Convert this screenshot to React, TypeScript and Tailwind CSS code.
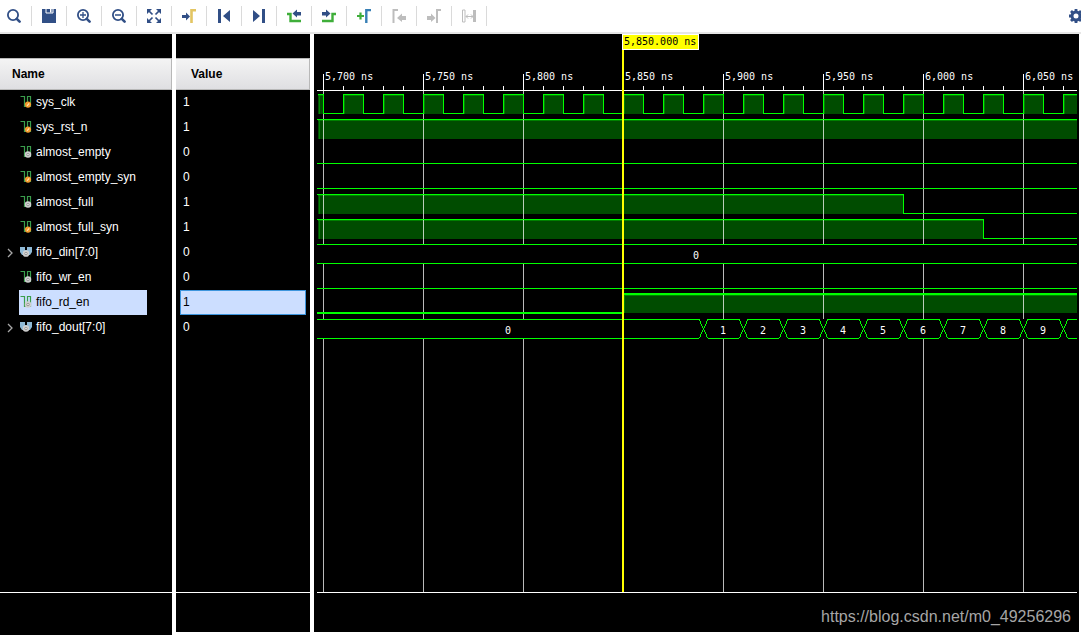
import React from "react";

const NAVY = "#314f86";
const GREEN = "#3fae3a";
const GRAY = "#bdbdbd";

type Tool = { label: string; art: React.ReactNode; disabled?: boolean };

const lens = (
  <>
    <circle cx="6" cy="6" r="5.1" fill="none" stroke={NAVY} strokeWidth="1.8" />
    <path d="M9.8 9.8L12.6 12.6" stroke={NAVY} strokeWidth="2.6" strokeLinecap="round" />
  </>
);

const tools: Tool[] = [
  { label: "Search", art: lens },
  {
    label: "Save",
    art: (
      <>
        <path d="M0 0H14V14H0Z" fill={NAVY} />
        <path d="M4 0V4H11V0" fill="none" stroke="#fff" />
        <path d="M8 0H9.5V3.5H8Z" fill="#fff" />
      </>
    ),
  },
  {
    label: "Zoom in",
    art: (
      <>
        {lens}
        <path d="M3 6H9M6 3V9" stroke={NAVY} strokeWidth="1.3" />
      </>
    ),
  },
  {
    label: "Zoom out",
    art: (
      <>
        {lens}
        <path d="M3 6H9" stroke={NAVY} strokeWidth="1.5" />
      </>
    ),
  },
  {
    label: "Zoom fit",
    art: (
      <>
        <path d="M0 0H5L0 5ZM14 0V5L9 0ZM0 14V9L5 14ZM14 14H9L14 9Z" fill={NAVY} />
        <path d="M1 1L5.5 5.5M13 1L8.5 5.5M1 13L5.5 8.5M13 13L8.5 8.5" stroke={NAVY} strokeWidth="1.7" />
      </>
    ),
  },
  {
    label: "Go to cursor",
    art: (
      <>
        <path d="M0 6H4V3.5L8 7.5L4 11.5V9H0Z" fill={NAVY} />
        <path d="M9.5 14V1.2H14" fill="none" stroke="#e3c562" strokeWidth="2.6" />
      </>
    ),
  },
  { label: "Go to start", art: <path d="M1 0H4V14H1ZM13 1V13L6 7Z" fill={NAVY} /> },
  { label: "Go to end", art: <path d="M10 0H13V14H10ZM1 1V13L8 7Z" fill={NAVY} /> },
  {
    label: "Previous transition",
    art: (
      <>
        <path d="M0 5H3.5V12H14" fill="none" stroke={GREEN} strokeWidth="2.4" />
        <path d="M14 3H10V0.5L5.5 4.5L10 8.5V6.5H14Z" fill={NAVY} />
      </>
    ),
  },
  {
    label: "Next transition",
    art: (
      <>
        <path d="M0 12H10.5V5H14" fill="none" stroke={GREEN} strokeWidth="2.4" />
        <path d="M0 3H4V0.5L8.5 4.5L4 8.5V6.5H0Z" fill={NAVY} />
      </>
    ),
  },
  {
    label: "Add marker",
    art: (
      <>
        <path d="M0 7H7M3.5 3.5V10.5" stroke={GREEN} strokeWidth="2.2" />
        <path d="M9.3 14V1H14" fill="none" stroke="#377fb5" strokeWidth="2.4" />
      </>
    ),
  },
  {
    label: "Previous marker",
    disabled: true,
    art: (
      <>
        <path d="M1.5 14V1H6" fill="none" stroke={GRAY} strokeWidth="2" />
        <path d="M14 7H10V4.5L5 9L10 13V11H14Z" fill={GRAY} />
      </>
    ),
  },
  {
    label: "Next marker",
    disabled: true,
    art: (
      <>
        <path d="M10 14V1H14" fill="none" stroke={GRAY} strokeWidth="2" />
        <path d="M0 7H4V4.5L8.5 9L4 13V11H0Z" fill={GRAY} />
      </>
    ),
  },
  {
    label: "Swap cursors",
    disabled: true,
    art: (
      <>
        <path d="M0.5 1H3V13H0.5Z" fill="none" stroke={GRAY} />
        <path d="M11 1H14V13H11Z" fill={GRAY} />
        <path d="M4 7.5H11M6 5.5L4 7.5L6 9.5M9 5.5L11 7.5L9 9.5" fill="none" stroke={GRAY} />
      </>
    ),
  },
];

type Kind = "orange" | "gray" | "bus";
const signals: { name: string; value: string; kind: Kind; selected?: boolean }[] = [
  { name: "sys_clk", value: "1", kind: "orange" },
  { name: "sys_rst_n", value: "1", kind: "orange" },
  { name: "almost_empty", value: "0", kind: "gray" },
  { name: "almost_empty_syn", value: "0", kind: "orange" },
  { name: "almost_full", value: "1", kind: "gray" },
  { name: "almost_full_syn", value: "1", kind: "orange" },
  { name: "fifo_din[7:0]", value: "0", kind: "bus" },
  { name: "fifo_wr_en", value: "0", kind: "gray" },
  { name: "fifo_rd_en", value: "1", kind: "gray", selected: true },
  { name: "fifo_dout[7:0]", value: "0", kind: "bus" },
];

function SignalIcon({ kind }: { kind: Kind }) {
  return (
    <svg className="h-3 w-3 shrink-0" viewBox="0 0 12 12" aria-hidden="true">
      {kind === "bus" ? (
        <path d="M0 1H5V4H7V1H12V6L10 9H2L0 6Z" fill="#8fb9d6" />
      ) : (
        <path d="M0.5 0.5H4.5V10.5H7.5V0.5H10.5V11" fill="none" stroke="#3a9e4c" strokeWidth="1.2" />
      )}
      {kind === "orange" ? (
        <>
          <circle cx="8" cy="8.6" r="3.1" fill="#f39a2d" />
          <path d="M7 9.8L9.2 7.4" stroke="#ffe6bd" strokeWidth="1.1" />
        </>
      ) : (
        <>
          <circle cx={kind === "bus" ? 6 : 8} cy={kind === "bus" ? 7.6 : 8.6} r="2.4" fill="#8a8a8a" stroke="#cfcfcf" strokeWidth="1.7" />
          <circle cx={kind === "bus" ? 6 : 8} cy={kind === "bus" ? 7.6 : 8.6} r="0.8" fill="#f4f4f4" />
        </>
      )}
    </svg>
  );
}

const START = 3;
const END = 763;
const LINE = "#00ff00";
const xAt = (ns: number) => 9 + (ns - 5700) * 2;
const majors = [5700, 5750, 5800, 5850, 5900, 5950, 6000, 6050];
const minors = Array.from({ length: 38 }, (_, i) => 5700 + i * 10);
const pulses = Array.from({ length: 19 }, (_, i) => 5710 + i * 20);
const changes = Array.from({ length: 10 }, (_, i) => 5890 + i * 20);
const stamp = (n: number) => `${n.toLocaleString("en-US")} ns`;

function High({ x1, x2, top, thick = 1 }: { x1: number; x2: number; top: number; thick?: number }) {
  return (
    <>
      <rect x={x1} y={top + thick} width={x2 - x1} height={20 - thick} fill="#004c00" />
      <rect x={x1} y={top + thick} width={x2 - x1} height={1} fill="#008000" />
      <rect x={x1 + 1} y={top + thick} width={1} height={20 - thick} fill="#008000" />
      <rect x={x1} y={top} width={x2 - x1} height={thick} fill={LINE} />
    </>
  );
}

function Level({ y, x1 = START, x2 = END, thick = 1 }: { y: number; x1?: number; x2?: number; thick?: number }) {
  return <rect x={x1} y={y} width={x2 - x1} height={thick} fill={LINE} />;
}

function Edge({ x, y }: { x: number; y: number }) {
  return <rect x={x} y={y} width={1} height={20} fill={LINE} />;
}

function Waveform() {
  const cursor = xAt(5850);
  const segments = [START, ...changes.map(xAt), END];
  return (
    <svg
      className="min-h-[320px] w-full flex-1 text-[10px]"
      fontFamily="'DejaVu Sans Mono', 'Liberation Mono', monospace"
      shapeRendering="crispEdges"
      role="img"
      aria-label="Waveform"
    >
      {majors.map((t) => (
        <g key={t}>
          <rect x={xAt(t)} y={40} width={1} height={17} fill="#fff" />
          <text x={xAt(t) + 2} y={46} fill="#fff">
            {stamp(t)}
          </text>
        </g>
      ))}
      {minors.map((t) => (
        <rect key={t} x={xAt(t)} y={52} width={1} height={4} fill="#fff" />
      ))}
      <rect x={START} y={56} width={END - START} height={1} fill="#fff" />

      <High x1={START + 1} x2={9} top={60} />
      {pulses.map((t) => (
        <High key={t} x1={xAt(t)} x2={Math.min(xAt(t + 10), END)} top={60} />
      ))}
      <High x1={START + 1} x2={END} top={85} />
      <High x1={START + 1} x2={xAt(5990)} top={160} />
      <High x1={START + 1} x2={xAt(6030)} top={185} />
      <High x1={cursor} x2={END} top={259} thick={2} />

      {majors.map((t) => (
        <g key={t} fill="#ffffff" opacity="0.73">
          <rect x={xAt(t)} y={57} width={1} height={153} />
          <rect x={xAt(t)} y={230} width={1} height={55} />
          <svg x={xAt(t)} y={305} width={1} height="100%">
            <rect width={1} height="100%" />
          </svg>
        </g>
      ))}

      <Edge x={9} y={60} />
      {pulses.map((t) => (
        <g key={t}>
          <Edge x={xAt(t)} y={60} />
          <Level y={60} x1={xAt(t)} x2={Math.min(xAt(t + 10), END)} />
          <Level y={79} x1={xAt(t - 10)} x2={xAt(t)} />
          {xAt(t + 10) < END && <Edge x={xAt(t + 10)} y={60} />}
        </g>
      ))}
      <Level y={85} />
      <Level y={129} />
      <Level y={154} />
      <Level y={160} x2={xAt(5990)} />
      <Edge x={xAt(5990)} y={160} />
      <Level y={179} x1={xAt(5990)} />
      <Level y={185} x2={xAt(6030)} />
      <Edge x={xAt(6030)} y={185} />
      <Level y={204} x1={xAt(6030)} />
      <Level y={210} />
      <Level y={229} />
      <text x={382} y={225} textAnchor="middle" fill="#fff">
        0
      </text>
      <Level y={254} />
      <Level y={278} x2={cursor} thick={2} />
      <Level y={259} x1={cursor} thick={2} />

      {segments.slice(0, -1).map((x, i) => {
        const left = i === 0 ? x : x + 5;
        const right = i === segments.length - 2 ? END : segments[i + 1] - 4;
        return (
          <g key={x}>
            <Level y={285} x1={left} x2={right} />
            <Level y={304} x1={left} x2={right} />
            {i < segments.length - 2 && (
              <text x={i === 0 ? 194 : (x + segments[i + 1]) / 2} y={300} textAnchor="middle" fill="#fff">
                {i}
              </text>
            )}
          </g>
        );
      })}
      {changes.map((t) => {
        const x = xAt(t) + 0.5;
        return (
          <path
            key={t}
            d={`M${x - 4} 285.5L${x - 3} 289L${x + 3} 301L${x + 4} 304.5M${x + 4} 285.5L${x + 3} 289L${x - 3} 301L${x - 4} 304.5`}
            fill="none"
            stroke={LINE}
          />
        );
      })}

      <rect x={cursor - 1} y={0} width={2} height="100%" fill="#ffff00" />
      <rect x={cursor - 1} y={0} width={77} height={16} fill="#fff" />
      <rect x={cursor} y={1} width={75} height={14} fill="#ffff00" />
      <text x={cursor + 1} y={11} fill="#000">
        5,850.000 ns
      </text>
    </svg>
  );
}

const header =
  "mt-6 flex h-8 shrink-0 items-center border border-l-0 border-[#b8b8b8] bg-linear-to-b from-[#f4f4f4] to-[#dfdfe2] font-bold text-black";

export default function App() {
  return (
    <div className="flex min-h-screen flex-col overflow-hidden bg-white font-['Liberation_Sans',Arial,sans-serif] text-xs text-white">
      <header className="flex h-[34px] shrink-0 items-center justify-between overflow-hidden border-b-2 border-[#e6e6e6] pl-[7px]">
        <div className="flex items-center gap-[10px]">
          {tools.map((tool) => (
            <React.Fragment key={tool.label}>
              <button type="button" aria-label={tool.label} disabled={tool.disabled} className="h-3.5 w-3.5">
                <svg className="h-3.5 w-3.5" viewBox="0 0 14 14" aria-hidden="true">
                  {tool.art}
                </svg>
              </button>
              <span className="h-5 w-px bg-[#dadada]" />
            </React.Fragment>
          ))}
        </div>
        <button type="button" aria-label="Settings" className="h-3.5 w-3 overflow-hidden">
          <svg className="h-3.5 w-3.5" viewBox="0 0 14 14" aria-hidden="true">
            <circle cx="7" cy="7" r="4" fill="none" stroke={NAVY} strokeWidth="3" />
            <path
              d="M7 0V3M7 11V14M0 7H3M11 7H14M2 2L4 4M10 10L12 12M12 2L10 4M4 10L2 12"
              stroke={NAVY}
              strokeWidth="2.8"
            />
          </svg>
        </button>
      </header>

      <main className="flex flex-1 gap-1 pr-0.5">
        <section className="flex w-[172px] shrink-0 flex-col bg-black">
          <h2 className={`${header} pl-3`}>Name</h2>
          <ul className="flex-1">
            {signals.map((s) => (
              <li key={s.name} className="flex h-[25px] items-center">
                <span className="flex w-[19px] shrink-0 justify-center">
                  {s.kind === "bus" && (
                    <button type="button" aria-label={`Expand ${s.name}`}>
                      <svg className="h-2.5 w-1.5" viewBox="0 0 6 10" aria-hidden="true">
                        <path d="M1 1L5 5L1 9" fill="none" stroke="#a8a8a8" strokeWidth="1.3" />
                      </svg>
                    </button>
                  )}
                </span>
                <button
                  type="button"
                  className={`flex h-full w-32 items-center gap-1 pb-0.5 pl-px text-left ${s.selected ? "bg-[#ccdeff] text-black" : ""}`}
                >
                  <SignalIcon kind={s.kind} />
                  {s.name}
                </button>
              </li>
            ))}
          </ul>
          <div className="h-[43px] border-t border-white" />
        </section>

        <section className="mb-[3px] flex w-[134px] shrink-0 flex-col bg-black">
          <h2 className={`${header} pl-[15px]`}>Value</h2>
          <ul className="flex-1 px-1">
            {signals.map((s) => (
              <li
                key={s.name}
                className={`flex h-[25px] items-center border pb-0.5 pl-0.5 ${s.selected ? "border-[#3d95dd] bg-[#ccdeff] text-black" : "border-transparent"}`}
              >
                {s.value}
              </li>
            ))}
          </ul>
          <div className="h-10 border-t border-white" />
        </section>

        <section className="mb-[3px] flex min-w-0 flex-1 flex-col bg-black">
          <Waveform />
          <footer className="mr-0.5 ml-[3px] flex h-10 items-center justify-end border-t border-white pt-2 pr-1.5 text-base text-[#a6a6a6]">
            <a href="https://blog.csdn.net/m0_49256296">https://blog.csdn.net/m0_49256296</a>
          </footer>
        </section>
      </main>
    </div>
  );
}
